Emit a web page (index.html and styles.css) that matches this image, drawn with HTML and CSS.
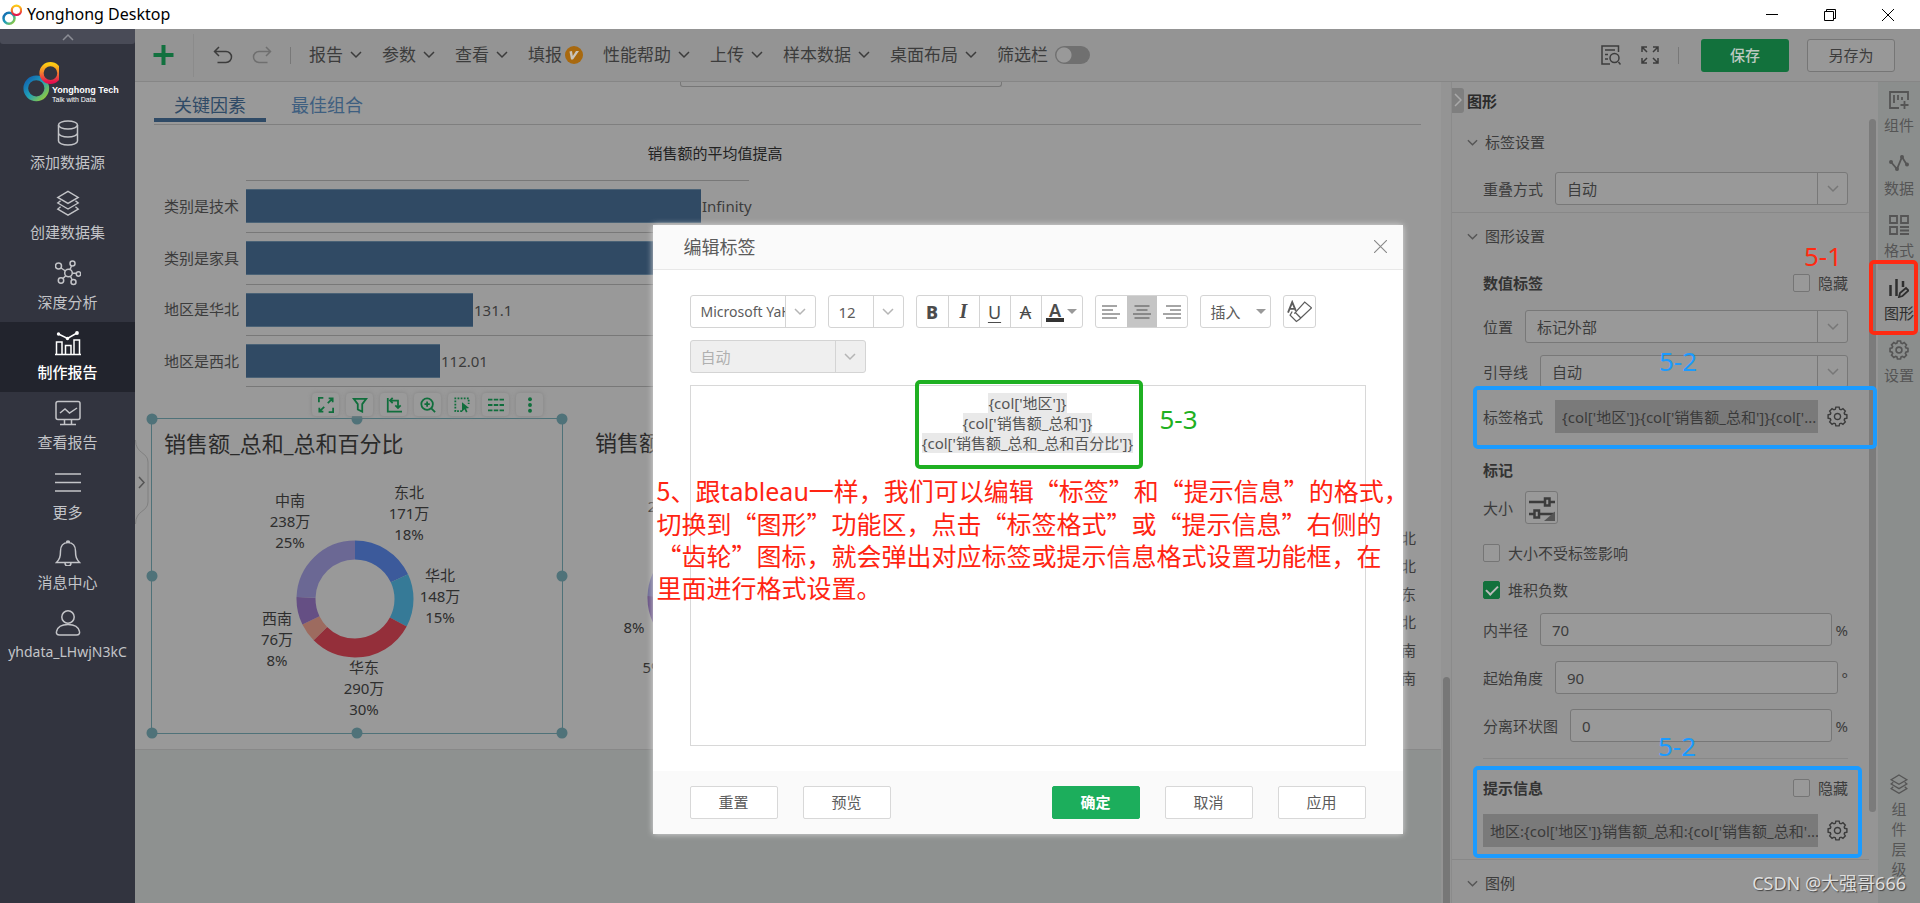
FILE: index.html
```html
<!DOCTYPE html>
<html lang="zh-CN">
<head>
<meta charset="utf-8">
<title>Yonghong Desktop</title>
<link rel="stylesheet" href="styles.css">
</head>
<body>
<svg class="sprite" aria-hidden="true">
  <symbol id="chev" viewBox="0 0 12 8"><path d="M1 1l5 5 5-5"/></symbol>
  <symbol id="gear" viewBox="-11 -11 22 22"><path d="M-1.7-9.85L1.7-9.85 2.3-7.55 3.7-7 5.7-8.2 8.2-5.7 7-3.7 7.55-2.3 9.85-1.7 9.85 1.7 7.55 2.3 7 3.7 8.2 5.7 5.7 8.2 3.7 7 2.3 7.55 1.7 9.85-1.7 9.85-2.3 7.55-3.7 7-5.7 8.2-8.2 5.7-7 3.7-7.55 2.3-9.85 1.7-9.85-1.7-7.55-2.3-7-3.7-8.2-5.7-5.7-8.2-3.7-7-2.3-7.55Z"/><circle r="3.2"/></symbol>
  <symbol id="layers" viewBox="0 0 26 28"><path d="M13 1.500L24 8 13 14.500 2 8zM5 11.500L2 14l11 6.500L24 14l-3-2.500M5 18l-3 2.500L13 27l11-6.500-3-2.500"/></symbol>
  <symbol id="rings" viewBox="0 0 34 40">
    <defs>
      <linearGradient id="cool" x1="0" y1="0" x2="1" y2="1"><stop offset="0" stop-color="#1060b0"/><stop offset=".5" stop-color="#20a0b8"/><stop offset="1" stop-color="#a0d030"/></linearGradient>
      <linearGradient id="warm" x1="0" y1="0" x2="0" y2="1"><stop offset="0" stop-color="#fccb12"/><stop offset=".5" stop-color="#f47a30"/><stop offset="1" stop-color="#e4104f"/></linearGradient>
    </defs>
    <circle cx="12.500" cy="26" r="10" fill="none" stroke="url(#cool)" stroke-width="4.500"/>
    <circle cx="26" cy="11.500" r="8.500" fill="none" stroke="url(#warm)" stroke-width="4"/>
  </symbol>
</svg>

<header class="titlebar">
  <svg class="app-icon"><use href="#rings"/></svg>
  <span class="app-name">Yonghong Desktop</span>
  <div class="win-controls">
    <button type="button" aria-label="最小化"><svg viewBox="0 0 12 12"><path d="M0 5.500h12"/></svg></button>
    <button type="button" aria-label="还原"><svg viewBox="0 0 12 12"><path d="M.5 2.500h9v9h-9zM2.500 2.500v-2h9v9h-2"/></svg></button>
    <button type="button" aria-label="关闭"><svg viewBox="0 0 12 12"><path d="M0 0l12 12M12 0L0 12"/></svg></button>
  </div>
</header>

<div class="app">
  <nav class="sidebar">
    <button class="side-collapse" type="button" aria-label="收起"><svg viewBox="0 0 12 8"><path d="M1 7l5-5 5 5"/></svg></button>
    <div class="brand">
      <svg class="brand-rings"><use href="#rings"/></svg>
      <div class="brand-text"><strong>Yonghong Tech</strong><small>Talk with Data</small></div>
    </div>
    <a class="side-item" href="#"><svg viewBox="0 0 26 26"><ellipse cx="13" cy="5" rx="9.500" ry="4"/><path d="M3.500 5v16c0 2.200 4.200 4 9.500 4s9.500-1.800 9.500-4V5M3.500 13c0 2.200 4.200 4 9.500 4s9.500-1.800 9.500-4"/></svg>添加数据源</a>
    <a class="side-item" href="#"><svg><use href="#layers"/></svg>创建数据集</a>
    <a class="side-item" href="#"><svg viewBox="0 0 26 26"><circle cx="13.500" cy="13" r="3.800"/><circle cx="3.500" cy="6" r="3"/><circle cx="17.500" cy="3.500" r="2.500"/><circle cx="23.500" cy="14" r="2.200"/><circle cx="18.500" cy="22" r="2.500"/><circle cx="6" cy="20.500" r="2.700"/><path d="M6 8l4.500 3M16.500 6l-1.500 3.500M17.300 13.300h4M15.500 16.500l1.800 3.500M10.700 15.700L8 18.500"/></svg>深度分析</a>
    <a class="side-item active" href="#"><svg viewBox="0 0 26 26"><path d="M0 24.500h26M1.500 24.500V12h5.500v12.500M10.500 24.500v-9h5.500v9M19 24.500V10h5.500v14.500M3.500 4l9 4.500L22 3"/><g class="dots"><circle cx="3.500" cy="4" r="1.700"/><circle cx="12.500" cy="8.500" r="1.700"/><circle cx="22" cy="3" r="1.900"/></g></svg>制作报告</a>
    <a class="side-item" href="#"><svg viewBox="0 0 26 26"><rect x="1" y="1.500" width="24" height="18" rx="2"/><path d="M5 13l5-4 4.500 4L22 8M9.500 20v4M16.500 20v4M5 24.500h16"/></svg>查看报告</a>
    <a class="side-item" href="#"><svg viewBox="0 0 26 26"><path d="M0 4h26M0 12.500h26M0 21h26"/></svg>更多</a>
    <a class="side-item" href="#"><svg viewBox="0 0 26 26"><path d="M13 2.500c-5 0-7.500 4-7.500 8.500 0 6-1 8-4 11.500h23c-3-3.500-4-5.500-4-11.500 0-4.500-2.500-8.500-7.500-8.500zM11.500 2.500a1.500 1.500 0 013 0M10 23a3 3 0 006 0"/></svg>消息中心</a>
    <a class="side-item user" href="#"><svg viewBox="0 0 26 26"><circle cx="13" cy="7" r="6.200"/><path d="M4.500 25h17c2.500 0 3.500-1.500 3-3.500-1-4.500-5.500-7-11.500-7s-10.500 2.500-11.500 7c-.5 2 .5 3.500 3 3.500z"/></svg>yhdata_LHwjN3kC</a>
  </nav>

  <div class="workspace">
    <div class="toolbar">
      <button class="tool-add" type="button" aria-label="新建"><svg viewBox="0 0 20 20"><path d="M10 0v20M0 10h20"/></svg></button>
      <button class="tool-icon undo" type="button" aria-label="撤销"><svg viewBox="0 0 20 18"><path d="M6 1L1.500 5.500 6 10M1.500 5.500H13a5.500 5.500 0 010 11H4.500"/></svg></button>
      <button class="tool-icon redo" type="button" aria-label="重做"><svg viewBox="0 0 20 18"><path d="M14 1l4.500 4.500L14 10M18.500 5.500H7a5.500 5.500 0 000 11h8.500"/></svg></button>
      <span class="tool-sep"></span>
      <div class="menus">
        <button class="menu" type="button">报告<svg><use href="#chev"/></svg></button>
        <button class="menu" type="button">参数<svg><use href="#chev"/></svg></button>
        <button class="menu" type="button">查看<svg><use href="#chev"/></svg></button>
        <button class="menu vip" type="button">填报<svg viewBox="0 0 18 18"><circle cx="9" cy="9" r="9"/><path d="M4.500 5.500l2.500-.5.800 5L11 5h3l-6 8.500H6z"/></svg></button>
        <button class="menu" type="button">性能帮助<svg><use href="#chev"/></svg></button>
        <button class="menu" type="button">上传<svg><use href="#chev"/></svg></button>
        <button class="menu" type="button">样本数据<svg><use href="#chev"/></svg></button>
        <button class="menu" type="button">桌面布局<svg><use href="#chev"/></svg></button>
        <label class="menu">筛选栏<input class="switch" type="checkbox"></label>
      </div>
      <div class="tool-right">
        <button class="tool-icon" type="button" aria-label="预览"><svg viewBox="0 0 20 20"><path d="M17.500 7V1H1v18h8M4 5h10M4 9.500h3M4 14h3M17.500 17l2 2.500"/><circle cx="13.500" cy="13" r="4.500"/></svg></button>
        <button class="tool-icon" type="button" aria-label="全屏"><svg viewBox="0 0 20 20"><path d="M2 7V2h5M2 2l5 5M13 2h5v5M18 2l-5 5M2 13v5h5M2 18l5-5M18 13v5h-5M18 18l-5-5"/></svg></button>
        <span class="tool-sep"></span>
        <button class="save" type="button">保存</button>
        <button class="save-as" type="button">另存为</button>
      </div>
    </div>

    <div class="work-row">
      <main class="canvas">
        <div class="page">
          <div class="widget-edge"></div>
          <div class="tabs"><a class="tab on" href="#">关键因素</a><a class="tab" href="#">最佳组合</a></div>
          <h3 class="bar-title">销售额的平均值提高</h3>
          <div class="bar-chart">
            <div class="bar-row"><span class="cat">类别是技术</span><div class="plot"><i class="bar" style="width:455px"></i>Infinity</div></div>
            <div class="bar-row"><span class="cat">类别是家具</span><div class="plot"><i class="bar" style="width:455px"></i></div></div>
            <div class="bar-row"><span class="cat">地区是华北</span><div class="plot"><i class="bar" style="width:227px"></i>131.1</div></div>
            <div class="bar-row"><span class="cat">地区是西北</span><div class="plot"><i class="bar" style="width:194px"></i>112.01</div></div>
          </div>
          <div class="cards">
            <section class="card selected">
              <h2>销售额_总和_总和百分比</h2>
              <svg class="donut" viewBox="0 0 411 260">
                <g class="ring" transform="translate(203 128) rotate(-90)">
                  <circle r="49" pathLength="360" stroke="#3c5a9b" stroke-dasharray="65 360"/>
                  <circle r="49" pathLength="360" stroke="#367a97" stroke-dasharray="53 360" stroke-dashoffset="-65"/>
                  <circle r="49" pathLength="360" stroke="#942f3a" stroke-dasharray="107 360" stroke-dashoffset="-118"/>
                  <circle r="49" pathLength="360" stroke="#9d6b5f" stroke-dasharray="19 360" stroke-dashoffset="-225"/>
                  <circle r="49" pathLength="360" stroke="#654f84" stroke-dasharray="28 360" stroke-dashoffset="-244"/>
                  <circle r="49" pathLength="360" stroke="#6b6894" stroke-dasharray="88 360" stroke-dashoffset="-272"/>
                </g>
                <g class="ring-labels">
                  <text x="138" y="35">中南</text><text x="138" y="56">238万</text><text x="138" y="77">25%</text>
                  <text x="257" y="27">东北</text><text x="257" y="48">171万</text><text x="257" y="69">18%</text>
                  <text x="288" y="110">华北</text><text x="288" y="131">148万</text><text x="288" y="152">15%</text>
                  <text x="212" y="202">华东</text><text x="212" y="223">290万</text><text x="212" y="244">30%</text>
                  <text x="125" y="153">西南</text><text x="125" y="174">76万</text><text x="125" y="195">8%</text>
                </g>
              </svg>
              <i class="knob tl"></i><i class="knob tm"></i><i class="knob tr"></i><i class="knob ml"></i><i class="knob mr"></i><i class="knob bl"></i><i class="knob bm"></i><i class="knob br"></i>
              <div class="card-tools">
                <button type="button" aria-label="放大"><svg viewBox="0 0 18 18"><path d="M1 6V1h5M12 1.500h4.500V6M16.500 1.500L11 7M1.500 12v4.500H6M1.500 16.500L7 11M17 12v5h-5"/></svg></button>
                <button type="button" aria-label="筛选"><svg viewBox="0 0 18 18"><path d="M2 2h14l-4.500 6v8.500l-5-2.500V8z"/></svg></button>
                <button type="button" aria-label="转换"><svg viewBox="0 0 18 18"><path d="M2 1v15.500h16M5 4h8.500v8M7.500 1L4.500 4l3 3M10.500 9.500l3 3 3-3"/></svg></button>
                <button type="button" aria-label="缩放"><svg viewBox="0 0 18 18"><circle cx="8" cy="8" r="6.500"/><path d="M8 5v6M5 8h6M12.700 12.700L17 17"/></svg></button>
                <button type="button" aria-label="选择"><svg viewBox="0 0 18 18"><path stroke-dasharray="2 1.500" d="M9 16H1.500V1.500h15V8"/><path class="solid" d="M9 6l8 6.500-3.500.5 1.700 3.500-1.700.8-1.700-3.500L9 16.500z"/></svg></button>
                <button type="button" aria-label="明细"><svg viewBox="0 0 18 18"><path d="M0 3h5M6.500 3h5M13 3h5M0 9h5M6.500 9h5M13 9h5M0 15h5M6.500 15h5M13 15h5"/></svg></button>
                <button type="button" aria-label="更多"><svg viewBox="0 0 18 18"><g class="solid"><circle cx="9" cy="2.500" r="2.200"/><circle cx="9" cy="9" r="2.200"/><circle cx="9" cy="15.500" r="2.200"/></g></svg></button>
              </div>
            </section>
            <section class="card second">
              <h2>销售额</h2>
              <div class="second-body">
                <svg class="donut" viewBox="0 0 240 260">
                  <g class="ring" transform="translate(123 128) rotate(-90)">
                    <circle r="49" pathLength="360" stroke="#654f84" stroke-dasharray="28 360" stroke-dashoffset="-244"/>
                    <circle r="49" pathLength="360" stroke="#6b6894" stroke-dasharray="88 360" stroke-dashoffset="-272"/>
                  </g>
                  <g class="ring-labels"><text x="69" y="42">2</text><text x="51" y="163">8%</text><text x="70" y="203">5%</text></g>
                </svg>
                <ul class="legend"><li>东北</li><li>华北</li><li>华东</li><li>西北</li><li>西南</li><li>中南</li></ul>
              </div>
            </section>
          </div>
        </div>
        <svg class="drawer-handle" viewBox="0 0 14 84"><path class="edge" d="M.5 0c0 14 12.500 12 12.500 22v40c0 10-12.500 8-12.500 22"/><path d="M4 37l5 5.500-5 5.500"/></svg>
      </main>
      <div class="canvas-scroll"><i></i></div>

      <aside class="panel">
        <div class="panel-head"><button type="button" aria-label="收起面板"><svg viewBox="0 0 8 14"><path d="M1 1l6 6-6 6"/></svg></button><h2>图形</h2></div>
        <div class="panel-body">
          <h3 class="section"><svg><use href="#chev"/></svg>标签设置</h3>
          <div class="field flush"><label for="overlap">重叠方式</label><div class="select"><select id="overlap"><option>自动</option></select><span><svg><use href="#chev"/></svg></span></div></div>
          <hr class="full">
          <h3 class="section"><svg><use href="#chev"/></svg>图形设置</h3>
          <div class="field group"><b>数值标签</b><label class="check"><input type="checkbox">隐藏</label></div>
          <div class="field near"><label for="pos">位置</label><div class="select"><select id="pos"><option>标记外部</option></select><span><svg><use href="#chev"/></svg></span></div></div>
          <div class="field near"><label for="lead">引导线</label><div class="select"><select id="lead"><option>自动</option></select><span><svg><use href="#chev"/></svg></span></div></div>
          <div class="field near marked fmt"><label for="fmt">标签格式</label><input id="fmt" class="readout" readonly value="{col['地区']}{col['销售额_总和']}{col['..."><button class="gear" type="button" aria-label="设置标签格式"><svg><use href="#gear"/></svg></button>
            <i class="mark-box"></i><span class="mark-no">5-2</span></div>
          <div class="field far"><b>标记</b></div>
          <div class="field tight"><label for="mark-size">大小</label><button id="mark-size" class="size-btn" type="button"><svg viewBox="0 0 26 26"><path d="M0 7h16M21 7h5M0 19h5M10 19h16"/><rect x="16" y="3.500" width="4.500" height="7"/><rect x="5.500" y="15.500" width="4.500" height="7"/><path class="corner" d="M26 16.500V26H15z"/></svg></button></div>
          <div class="field wide"><label class="check"><input type="checkbox">大小不受标签影响</label></div>
          <div class="field mid"><label class="check"><input type="checkbox" checked>堆积负数</label></div>
          <div class="field near"><label for="inner">内半径</label><input id="inner" class="num" value="70"><span class="unit">%</span></div>
          <div class="field mid"><label for="start">起始角度</label><input id="start" class="num" value="90"><span class="unit">°</span></div>
          <div class="field mid"><label for="split">分离环状图</label><input id="split" class="num" value="0"><span class="unit">%</span></div>
          <hr class="inset">
          <div class="marked tip">
            <div class="field wide"><b>提示信息</b><label class="check"><input type="checkbox">隐藏</label></div>
            <div class="field mid"><input class="readout" aria-label="提示信息" readonly value="地区:{col['地区']}销售额_总和:{col['销售额_总和'..."><button class="gear" type="button" aria-label="设置提示信息"><svg><use href="#gear"/></svg></button></div>
            <i class="mark-box"></i><span class="mark-no">5-2</span>
          </div>
          <hr class="full">
          <h3 class="section"><svg><use href="#chev"/></svg>图例</h3>
          <i class="panel-thumb"></i>
        </div>
      </aside>

      <div class="rail">
        <div class="rail-tabs">
          <button type="button"><svg viewBox="0 0 20 20"><path d="M19 10V2H1v16h9M5 5v8M9 5v5M13 7v3M15.500 11v8M11.500 15h8"/></svg>组件</button>
          <button type="button"><svg viewBox="0 0 20 20"><path d="M2 9l6 7 5-12 5 8"/><g class="solid"><circle cx="2" cy="9" r="2"/><circle cx="8" cy="16" r="2"/><circle cx="13" cy="4" r="2"/><circle cx="18" cy="11.500" r="2"/></g></svg>数据</button>
          <button type="button"><svg viewBox="0 0 20 20"><path d="M1 1h7v7H1zM12 1h7v7h-7zM1 12h7v7H1zM11 12h9M11 15.500h9M11 19h9"/></svg>格式</button>
          <button class="on" type="button"><svg viewBox="0 0 20 20"><path d="M1.500 7v11M7.500 1v17M14 3v6" stroke-width="2.500"/><path d="M10 19l1-4 6-5 2.500 2.500-6 5.500z"/></svg>图形<i class="mark-box red"></i><span class="mark-no red">5-1</span></button>
          <button type="button"><svg><use href="#gear"/></svg>设置</button>
        </div>
        <button class="rail-layers" type="button"><svg><use href="#layers"/></svg><span>组件层级</span></button>
      </div>
    </div>

    <div class="modal-layer">
      <div class="modal" role="dialog" aria-labelledby="dlg">
        <div class="modal-head"><h2 id="dlg">编辑标签</h2><button type="button" aria-label="关闭"><svg viewBox="0 0 12 12"><path d="M0 0l12 12M12 0L0 12"/></svg></button></div>
        <div class="modal-body">
          <div class="fmt-row">
            <div class="select font"><select aria-label="字体"><option>Microsoft YaHei</option></select><span><svg><use href="#chev"/></svg></span></div>
            <div class="select size"><select aria-label="字号"><option>12</option></select><span><svg><use href="#chev"/></svg></span></div>
            <div class="btn-group">
              <button class="b" type="button">B</button><button class="i" type="button">I</button><button class="u" type="button">U</button><button class="s" type="button">A</button><button class="color" type="button"><span>A</span><i class="caret"></i></button>
            </div>
            <div class="btn-group align">
              <button type="button" aria-label="左对齐"><svg viewBox="0 0 18 14"><path d="M0 1h15M0 5h11M0 9h18M0 13h15"/></svg></button><button class="on" type="button" aria-label="居中"><svg viewBox="0 0 18 14"><path d="M1.500 1h15M3.500 5h11M0 9h18M1.500 13h15"/></svg></button><button type="button" aria-label="右对齐"><svg viewBox="0 0 18 14"><path d="M3 1h15M7 5h11M0 9h18M3 13h15"/></svg></button>
            </div>
            <button class="insert" type="button">插入<i class="caret"></i></button>
            <button class="eraser" type="button" aria-label="清除格式"><svg viewBox="0 0 24 22"><path d="M7 13L17 2l6.500 5.500L12 18.500 9 20.500 3 14.500 5 11M8 12l5.500 5.500"/><path class="fat" d="M1 12L5 2l3.500 8.500M2 8.500h5.500"/></svg></button>
          </div>
          <div class="fmt-row second-row">
            <div class="select auto"><select aria-label="格式" disabled><option>自动</option></select><span><svg><use href="#chev"/></svg></span></div>
          </div>
          <div class="editor" contenteditable="true">
            <p><mark>{col['地区']}</mark></p>
            <p><mark>{col['销售额_总和']}</mark></p>
            <p><mark>{col['销售额_总和_总和百分比']}</mark></p>
          </div>
          <i class="mark-box green"></i><span class="mark-no green">5-3</span>
        </div>
        <div class="modal-foot">
          <button type="button">重置</button><button type="button">预览</button>
          <span class="grow"></span>
          <button class="ok" type="button">确定</button><button type="button">取消</button><button type="button">应用</button>
        </div>
        <p class="note">5、跟<span>tableau</span>一样，我们可以编辑“标签”和“提示信息”的格式，<br>切换到“图形”功能区，点击“标签格式”或“提示信息”右侧的<br>“齿轮”图标，就会弹出对应标签或提示信息格式设置功能框，在<br>里面进行格式设置。</p>
      </div>
    </div>
  </div>
</div>
<div class="watermark">CSDN @大强哥666</div>
</body>
</html>
```
FILE: styles.css
```css
* { box-sizing: border-box; margin: 0; padding: 0; }
body {
  display: flex; flex-direction: column; height: 100vh; overflow: hidden; position: relative;
  font: 15px/22px "Noto Sans", "Noto Sans CJK SC", sans-serif; color: #3c3c3c; background: #8e9190;
}
button, input, select { font: inherit; color: inherit; background: none; border: 0; outline: 0; }
select { appearance: none; }
a { color: inherit; text-decoration: none; }
ul { list-style: none; }
i { font-style: normal; }
svg { fill: none; stroke: currentColor; stroke-width: 1.5; flex: none; display: block; }
.sprite { position: absolute; width: 0; height: 0; }
.solid { fill: currentColor; stroke: none; }

.titlebar { height: 29px; flex: none; display: flex; align-items: center; gap: 5px; padding-left: 1px; background: #fff; color: #000; }
.app-icon { width: 21px; height: 22px; }
.app-name { font-size: 16px; flex: 1; padding-bottom: 1px; }
.win-controls { display: flex; padding-right: 3px; }
.win-controls button { width: 58px; height: 28px; display: grid; place-items: center; }
.win-controls svg { width: 12px; height: 12px; stroke-width: 1; }

.app { flex: 1; min-height: 0; display: flex; }
.sidebar { width: 135px; flex: none; background: #32343f; color: #c3c4c8; display: flex; flex-direction: column; }
.side-collapse { height: 15px; background: #494b57; border-radius: 0 0 3px 3px; display: grid; place-items: center; color: #8b8d95; }
.side-collapse svg { width: 14px; height: 8px; }
.brand { height: 68px; display: flex; align-items: flex-start; padding: 17px 0 0 23px; color: #fff; }
.brand-rings { width: 36px; height: 42px; margin-right: -7px; }
.brand-text { padding-top: 24px; line-height: 10px; white-space: nowrap; font-family: "Liberation Sans", sans-serif; }
.brand-text strong { display: block; font-size: 9px; }
.brand-text small { display: block; font-size: 7px; line-height: 9px; }
.side-item { height: 70px; display: flex; flex-direction: column; align-items: center; gap: 5px; padding-top: 8px; white-space: nowrap; }
.side-item svg { width: 26px; height: 26px; }
.side-item.active { background: #22242d; color: #fff; font-weight: 500; }
.side-item.user { font-size: 14px; }
.dots { fill: currentColor; stroke: none; }

.workspace { flex: 1; min-width: 0; display: flex; flex-direction: column; position: relative; }
.toolbar { height: 53px; flex: none; display: flex; align-items: center; background: #949494; border-bottom: 1px solid #868686; font-size: 17px; }
.tool-add { width: 59px; height: 43px; padding-left: 18px; border-right: 1px solid #8b8b8b; color: #12713f; }
.tool-add svg { width: 21px; height: 20px; stroke-width: 4; }
.tool-icon svg { width: 20px; height: 20px; }
.undo { margin-left: 19px; }
.redo { margin-left: 19px; color: #6f6f6f; }
.tool-sep { width: 1px; height: 17px; background: #787878; margin: 0 18px; }
.menus { display: flex; align-items: center; gap: 20px; }
.menu { display: flex; align-items: center; gap: 7px; line-height: 26px; white-space: nowrap; }
.menu svg { width: 12px; height: 8px; }
.menu.vip { gap: 3px; }
.menu.vip svg { width: 18px; height: 18px; stroke: none; }
.vip circle { fill: #a8690f; }
.vip path { fill: #c9c4bb; }
.switch { appearance: none; width: 35px; height: 18px; border-radius: 9px; background: radial-gradient(circle at 9px 9px, #999 7px, #707070 8px); }
.tool-right { margin-left: auto; display: flex; align-items: center; padding-right: 25px; font-size: 15px; }
.tool-right .tool-icon + .tool-icon { margin-left: 19px; }
.tool-right .tool-sep { margin-right: 22px; }
.save, .save-as { width: 88px; height: 33px; border-radius: 3px; }
.save { background: #12713c; color: #bcc9c0; font-weight: 500; margin-right: 18px; }
.save-as { border: 1px solid #767676; background: #989898; }

.work-row { flex: 1; min-height: 0; display: flex; }
.canvas { flex: 1; min-width: 0; overflow: hidden; position: relative; }
.page { background: #999; padding: 0 20px 15px 16px; border-bottom: 1px solid #888; position: relative; }
.widget-edge { position: absolute; top: 0; left: 545px; width: 322px; height: 5px; border: 1px solid #777; border-top: 0; border-radius: 0 0 3px 3px; }
.tabs { margin-left: 3px; height: 43px; border-bottom: 1px solid #7f7f7f; display: flex; gap: 5px; font-size: 18px; color: #3f5f80; }
.tab { height: 40px; padding: 11px 20px 0; line-height: 24px; }
.tab.on { color: #2f4a66; border-bottom: 4px solid #2f4a66; }
.bar-title { margin-left: 3px; max-width: 1122px; text-align: center; font-size: 15px; font-weight: 400; line-height: 22px; padding: 17px 0 16px; color: #222; }
.bar-chart { margin-left: 3px; display: grid; grid-template-rows: repeat(4, 1fr); height: 207px; }
.bar-row { display: grid; grid-template-columns: 85px 503px; column-gap: 7px; align-items: center; }
.cat { text-align: right; white-space: nowrap; }
.plot { height: 100%; display: flex; align-items: center; gap: 1px; border-top: 1px solid #787878; line-height: 32px; }
.bar-row:last-child .plot { border-bottom: 1px solid #787878; }
.bar { flex: none; height: 34px; background: #304a64; border: 1px solid #4a6276; border-width: 1px 0; }

.cards { margin-top: 31px; display: flex; gap: 20px; }
.card h2 { font-size: 22px; line-height: 30px; font-weight: 400; color: #2a2a2a; padding: 9px 0 0 12px; white-space: nowrap; }
.selected { width: 412px; height: 316px; flex: none; border: 1px solid #4f7279; position: relative; }
.second { flex: 1; height: 316px; overflow: hidden; }
.second-body { display: flex; justify-content: space-between; }
.donut { display: block; height: 260px; margin-top: 13px; }
.ring circle { stroke-width: 19; }
.ring-labels { fill: #2e2e2e; stroke: none; text-anchor: middle; }
.legend { padding: 67px 5px 0 0; line-height: 28px; }
.knob { position: absolute; width: 11px; height: 11px; border-radius: 50%; background: #4f7279; transform: translate(-50%, -50%); }
.tl, .tm, .tr { top: 0; }
.ml, .mr { top: 50%; }
.bl, .bm, .br { top: 100%; }
.tl, .ml, .bl { left: 0; }
.tm, .bm { left: 50%; }
.tr, .mr, .br { left: 100%; }
.card-tools { position: absolute; left: 160px; top: -26px; display: flex; gap: 7px; color: #106e3c; }
.card-tools button { width: 27px; height: 23px; border-radius: 4px; background: #9a9a9a; box-shadow: 0 0 4px #858585; display: grid; place-items: center; }
.card-tools svg { width: 16px; height: 16px; stroke-width: 2; }
.drawer-handle { position: absolute; left: 0; top: 358px; width: 14px; height: 84px; fill: #989898; color: #555; }
.drawer-handle .edge { stroke: #808080; stroke-width: 1; }
.drawer-handle path + path { fill: none; }
.canvas-scroll { width: 11px; background: #949494; display: flex; align-items: flex-end; justify-content: center; border-right: 1px solid #8b8b8b; }
.canvas-scroll i { width: 7px; height: 226px; background: #777; border-radius: 4px 4px 0 0; }

.panel { width: 426px; flex: none; background: #959595; display: flex; flex-direction: column; }
.panel-head { height: 37px; flex: none; display: flex; align-items: center; gap: 3px; color: #2b2b2b; }
.panel-head h2 { font-size: 15px; font-weight: 700; }
.panel-head button { width: 12px; height: 25px; background: #7f7f7f; border-radius: 0 3px 3px 0; display: grid; place-items: center; color: #aaa; margin-bottom: 1px; }
.panel-head svg { width: 8px; height: 14px; }
.panel-body { position: relative; padding: 0 30px 0 31px; }
.panel-thumb { position: absolute; right: 2px; top: 0; width: 7px; height: 693px; border-radius: 4px; background: #7b7b7b; }
.section { display: flex; align-items: center; gap: 7px; margin-left: -16px; padding: 12px 0 0; font-size: 15px; font-weight: 400; }
.section svg { width: 11px; height: 8px; margin-top: 2px; color: #555; }
hr { border: 0; border-top: 1px solid #888; }
hr.full { margin: 7px -21px 0 -31px; }
.marked + hr.full { margin-top: 12px; }
hr.inset { margin-top: 16px; }
.field { display: flex; align-items: center; white-space: nowrap; }
.field > label:first-child { margin-right: 12px; }
.field b { flex: 1; font-weight: 600; color: #333; }
.field.group { margin-top: 25px; margin-bottom: 16px; }
.field.flush { margin-top: 19px; }
.field.near { margin-top: 12px; }
.field.tight { margin-top: 10px; }
.field.mid { margin-top: 15px; }
.field.wide { margin-top: 18px; }
.field.far { margin-top: 26px; }
.select { flex: 1; height: 33px; display: flex; border: 1px solid #787878; border-radius: 3px; background: #999; overflow: hidden; }
.select select { flex: 1; min-width: 0; padding-left: 11px; }
.select span { width: 30px; flex: none; border-left: 1px solid #787878; display: grid; place-items: center; color: #777; }
.select svg { width: 12px; height: 8px; }
.check { display: flex; align-items: center; gap: 8px; }
.check input { appearance: none; width: 17px; height: 18px; border: 1px solid #757575; border-radius: 2px; background: #999; display: grid; place-items: center; }
.check input:checked { background: #12713c; border-color: #12713c; }
.check input:checked::after { content: ""; width: 10px; height: 5px; border: solid #bbb; border-width: 0 0 2px 2px; transform: rotate(-45deg) translate(1px, -1px); }
.readout { flex: 1; min-width: 0; height: 33px; background: #7a7a7a; padding: 0 0 0 7px; color: #3a3a3a; }
.gear { width: 30px; height: 33px; padding-left: 9px; color: #3c3c3c; }
.gear svg { width: 21px; height: 21px; }
.num { flex: 1; min-width: 0; height: 33px; border: 1px solid #777; border-radius: 3px; background: #999; padding: 0 11px; }
.unit { padding-left: 4px; }
.size-btn { width: 33px; height: 33px; border: 1px solid #777; border-radius: 3px; background: #999; display: grid; place-items: center; }
.size-btn svg { width: 26px; height: 26px; stroke-width: 2.5; }
.size-btn .corner { fill: #555; stroke: none; }

.marked { position: relative; }
.mark-box { position: absolute; border: 4px solid #1b9bff; border-radius: 5px; pointer-events: none; z-index: 2; }
.mark-no { position: absolute; font-size: 26px; line-height: 30px; color: #1b9bff; font-weight: 400; white-space: nowrap; z-index: 2; }
.fmt .mark-box { inset: -14px -29px -16px -10px; }
.fmt .mark-no { left: 176px; top: -54px; }
.tip .mark-box { inset: -11px -14px -11px -10px; }
.tip .mark-no { left: 175px; top: -46px; }

.rail { width: 42px; flex: none; background: #8b8e8d; display: flex; flex-direction: column; justify-content: space-between; color: #555; }
.rail-tabs { height: 313px; display: grid; grid-template-rows: repeat(5, 1fr); }
.rail button { display: flex; flex-direction: column; align-items: center; padding-top: 8px; gap: 4px; position: relative; white-space: nowrap; }
.rail svg { width: 20px; height: 20px; stroke-width: 1.8; }
.rail .on { background: #949494; color: #2e2e2e; }
.mark-box.red { border-color: #ff2a12; inset: -10px 2px -3px -9px; }
.mark-no.red { color: #ff2a12; left: -74px; top: -29px; }
.rail-layers span { width: 15px; white-space: normal; line-height: 20px; }
.rail .rail-layers { padding-bottom: 24px; gap: 5px; }

.modal-layer { position: absolute; inset: 0; padding-top: 196px; display: flex; justify-content: center; align-items: flex-start; pointer-events: none; }
.modal { width: 750px; background: #fff; border-radius: 2px; box-shadow: 0 0 6px #ddd; position: relative; color: #5c5c5c; pointer-events: auto; }
.modal-head { height: 45px; background: #fafafa; border-bottom: 1px solid #e8e8e8; display: flex; align-items: center; justify-content: space-between; padding: 0 16px 0 31px; }
.modal-head h2 { font-size: 18px; font-weight: 400; line-height: 26px; }
.modal-head svg { width: 13px; height: 13px; color: #888; stroke-width: 1; margin-bottom: 2px; }
.modal-body { padding: 25px 37px; position: relative; }
.fmt-row { display: flex; gap: 12px; }
.second-row { margin-top: 12px; }
.modal .select { flex: none; border-color: #d4d4d4; background: #fff; }
.modal .select span { border-color: #d4d4d4; color: #b5b5b5; }
.modal .select select { padding-left: 10px; opacity: 1; }
.modal .font { width: 126px; font-size: 14px; }
.modal .size { width: 76px; }
.modal .auto { width: 176px; background: #efefef; color: #b0b0b0; }
.btn-group { display: flex; border: 1px solid #d4d4d4; border-radius: 3px; height: 33px; overflow: hidden; }
.btn-group button { width: 31px; display: grid; place-items: center; font-size: 18px; color: #4c4c4c; }
.btn-group button + button { border-left: 1px solid #d4d4d4; }
.btn-group.align button + button { width: 30px; border-left: 0; }
.btn-group .on { background: #c5c5c5; }
.btn-group svg { width: 18px; height: 14px; stroke-width: 1; }
.b { font-weight: 800; }
.btn-group .i { font: italic 700 20px "Liberation Serif", serif; }
.u { text-decoration: underline; text-underline-offset: 3px; }
.s { text-decoration: line-through; }
.btn-group .color { width: 41px; display: flex; align-items: center; justify-content: center; gap: 3px; font-weight: 600; }
.color span { border-bottom: 4px solid #333; line-height: 16px; padding: 0 3px; }
.caret { border: 5px solid transparent; border-top-color: #999; border-bottom: 0; }
.insert, .eraser { height: 33px; border: 1px solid #d4d4d4; border-radius: 3px; }
.insert { width: 71px; display: flex; align-items: center; justify-content: space-between; padding: 0 4px 0 10px; }
.eraser { width: 33px; display: grid; place-items: center; }
.eraser svg { width: 25px; height: 23px; stroke-width: 1.2; }
.eraser .fat { stroke-width: 1.8; }
.editor { margin-top: 12px; height: 361px; border: 1px solid #d8d8d8; padding: 7px; text-align: center; line-height: 20px; }
.editor mark { background: #e9e9e9; color: #555; }
.mark-box.green { border-color: #1fb022; left: 262px; top: 110px; width: 228px; height: 89px; }
.mark-no.green { color: #1fb022; left: 507px; top: 134px; }
.modal-foot { height: 63px; background: #fafafa; display: flex; align-items: center; gap: 25px; padding: 0 37px 1px; }
.modal-foot button { width: 88px; height: 33px; border: 1px solid #d8d8d8; border-radius: 2px; background: #fff; }
.modal-foot .grow { margin: 0 -25px; }
.modal-foot .ok { background: #1cae5c; border-color: #1cae5c; color: #fff; font-weight: 600; }
.grow { flex: 1; }
.note { position: absolute; left: 4px; top: 249px; font: 25px/32px "Noto Sans CJK SC", sans-serif; color: #ff2412; white-space: nowrap; }
.note span { font-family: "Noto Sans", sans-serif; }
.watermark { position: absolute; right: 14px; bottom: 7px; font-size: 18px; line-height: 26px; color: #dedede; text-shadow: 1px 1px 1px #444; z-index: 5; }
```
